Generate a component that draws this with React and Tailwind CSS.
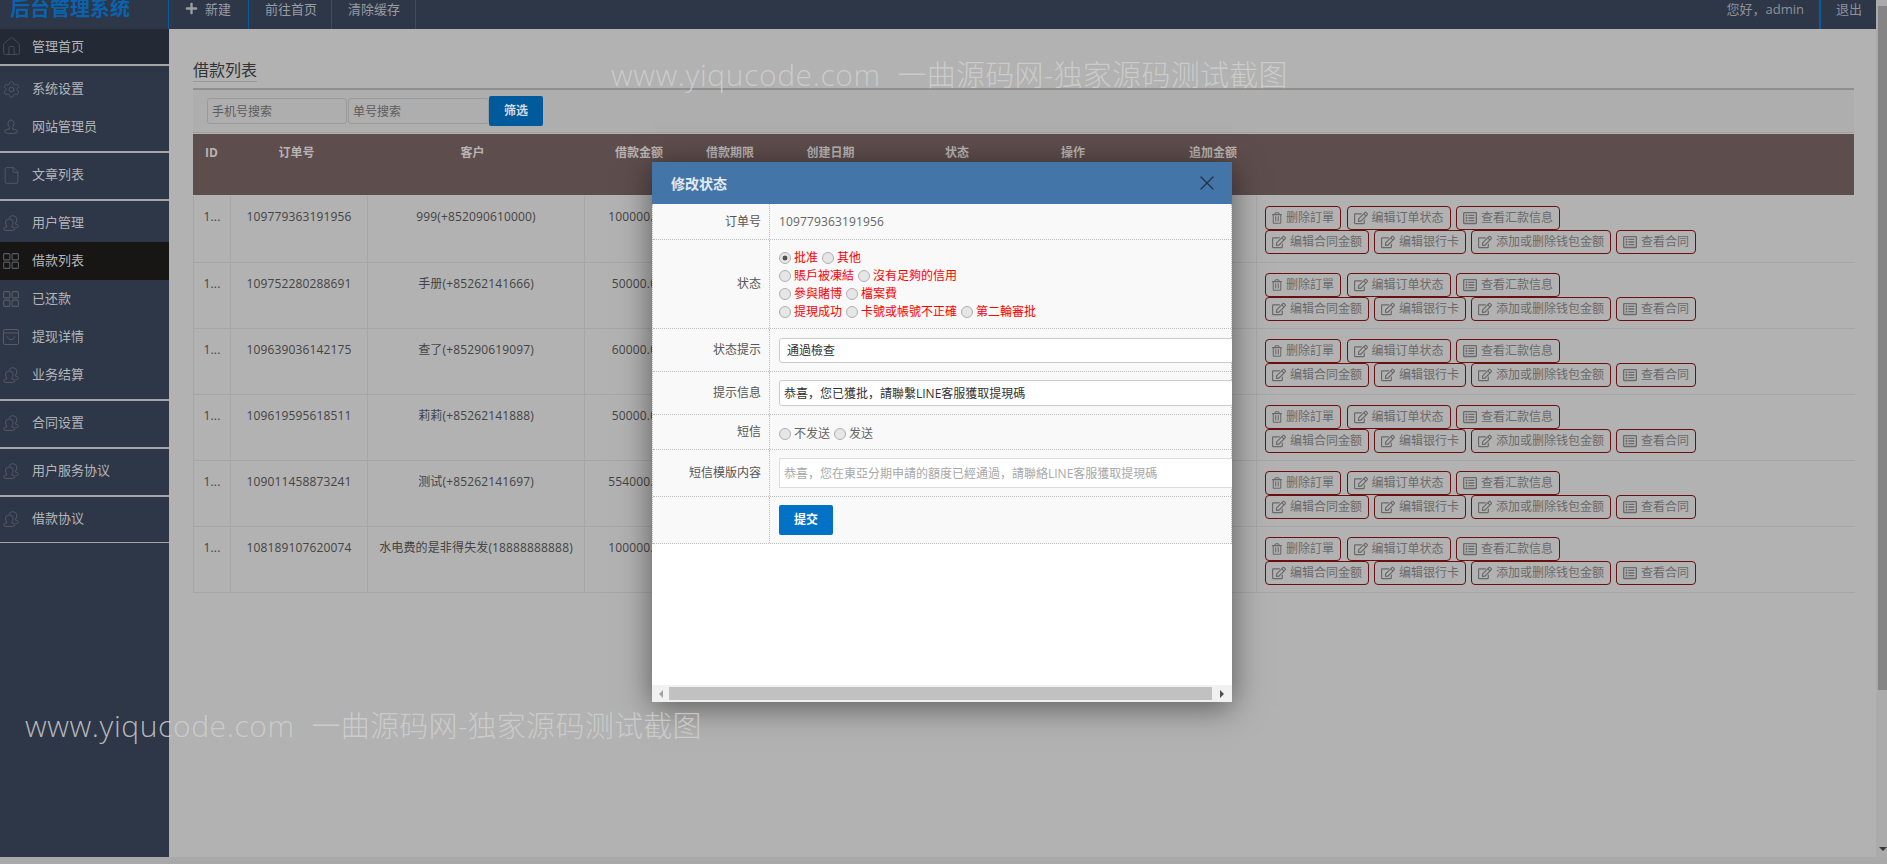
import { House, Settings, File, X } from "lucide-react";
import { FaPlus, FaRegTrashAlt, FaRegEdit, FaRegListAlt } from "react-icons/fa";

const FONT = "font-['Open_Sans','Noto_Sans_CJK_SC',sans-serif]";

function UserIcon() {
  return (
    <svg width="16" height="16" viewBox="0 0 16 16" fill="none" stroke="currentColor" strokeWidth="1">
      <path d="M8 1c-2 0-3 1.500-3 3.500 0 2 .8 3.300 1.500 4v1.500c-2.500.3-5 1.200-5 2.800 0 1 2.500 1.700 6.500 1.700s6.500-.7 6.500-1.700c0-1.600-2.500-2.500-5-2.800V8.500c.7-.7 1.500-2 1.500-4C11 2.500 10 1 8 1z" />
    </svg>
  );
}

function UsersIcon() {
  return (
    <svg width="16" height="16" viewBox="0 0 16 16" fill="none" stroke="currentColor" strokeWidth="1">
      <path d="M6 3.200C6.500 1.700 7.900.8 9.800.8c2.500 0 4 1.700 4 3.900 0 1.500-.6 2.700-1.400 3.400v1c1.700.3 3 1 3 2 0 .9-1.200 1.500-3 1.800" />
      <path d="M6.300 4c-2.300 0-3.800 1.700-3.800 3.800 0 1.400.6 2.500 1.300 3.200v1C2 12.300.6 13 .6 14c0 1 2.300 1.500 5.700 1.500S12 15 12 14c0-1-1.400-1.700-3.200-2v-1c.7-.7 1.300-1.800 1.300-3.200C10.100 5.700 8.600 4 6.300 4z" />
    </svg>
  );
}

function GridIcon() {
  return (
    <svg width="16" height="16" viewBox="0 0 16 16" fill="none" stroke="currentColor" strokeWidth="1.100">
      <rect x="0.600" y="0.600" width="6.300" height="6.300" rx="1" />
      <rect x="9.100" y="0.600" width="6.300" height="6.300" rx="1" />
      <rect x="0.600" y="9.100" width="6.300" height="6.300" rx="1" />
      <rect x="9.100" y="9.100" width="6.300" height="6.300" rx="1" />
    </svg>
  );
}

function BoxIcon() {
  return (
    <svg width="16" height="16" viewBox="0 0 16 16" fill="none" stroke="currentColor" strokeWidth="1">
      <rect x="0.500" y="0.500" width="15" height="15" rx="1.500" />
      <path d="M.5 4h15M4.500 7.500c.3 2 1.700 3.200 3.500 3.200s3.200-1.200 3.500-3.200" />
    </svg>
  );
}

function SideItem({ icon, label, active, height = "h-[38px]", bg = "" }) {
  return (
    <div className={`flex items-center pl-[3px] ${height} ${active ? "bg-[#171615]" : bg}`}>
      <span className="w-[16px] h-[16px] text-[#565b64] flex items-center justify-center">{icon}</span>
      <span className="ml-[13px] text-[13px] text-[#b4b6b8]">{label}</span>
    </div>
  );
}

function Sidebar() {
  return (
    <aside className="w-[169px] bg-[#2d3748] shrink-0">
      <div className="border-b-2 border-[#a6a6a6]">
        <SideItem icon={<House size={21} strokeWidth={1} className="shrink-0 text-[#4c515a]" />} label="管理首页" height="h-[35px]" bg="bg-[#232a36]" />
      </div>
      <div className="border-b-2 border-[#a6a6a6] pt-[4px] pb-[5px]">
        <SideItem icon={<Settings size={19} strokeWidth={1.100} className="shrink-0" />} label="系统设置" />
        <SideItem icon={<UserIcon />} label="网站管理员" />
      </div>
      <div className="border-b-2 border-[#a6a6a6] pt-[3px] pb-[5px]">
        <SideItem icon={<File size={19} strokeWidth={1.100} className="shrink-0" />} label="文章列表" />
      </div>
      <div className="border-b-2 border-[#a6a6a6] pt-[3px] pb-[5px]">
        <SideItem icon={<UsersIcon />} label="用户管理" />
        <SideItem icon={<GridIcon />} label="借款列表" active />
        <SideItem icon={<GridIcon />} label="已还款" />
        <SideItem icon={<BoxIcon />} label="提现详情" />
        <SideItem icon={<UsersIcon />} label="业务结算" />
      </div>
      <div className="border-b-2 border-[#a6a6a6] pt-[3px] pb-[5px]">
        <SideItem icon={<UsersIcon />} label="合同设置" />
      </div>
      <div className="border-b-2 border-[#a6a6a6] pt-[3px] pb-[5px]">
        <SideItem icon={<UsersIcon />} label="用户服务协议" />
      </div>
      <div className="border-b border-[#a6a6a6] pt-[3px] pb-[4px]">
        <SideItem icon={<UsersIcon />} label="借款协议" />
      </div>
    </aside>
  );
}

function TopBar() {
  return (
    <header className="h-[29px] bg-[#2d3748] flex shrink-0 text-[13px] leading-[18px] text-[#989ca3] overflow-hidden">
      <div className="w-[169px] border-r border-[#0b5a9c] shrink-0">
        <div className="pl-[10px] -mt-[1px] text-[20px] leading-[20px] font-bold text-[#0b62ad]">后台管理系统</div>
      </div>
      <div className="w-[80px] pl-[16px] border-r border-[#0b5a9c] flex items-start gap-[7px]">
        <FaPlus size={13} className="mt-[2px]" />
        <span>新建</span>
      </div>
      <div className="w-[83px] pl-[16px] border-r border-[#0b5a9c]">前往首页</div>
      <div className="w-[84px] pl-[16px] border-r border-[#0b5a9c]">清除缓存</div>
      <div className="ml-auto pr-[15px] text-[#8d9299]">您好，admin</div>
      <div className="w-[57px] pl-[15px] border-l-2 border-[#0b5a9c] text-[#8d9299]">退出</div>
    </header>
  );
}

const HEAD = [
  ["ID", "w-[37px]"],
  ["订单号", "w-[133px]"],
  ["客户", "w-[219px]"],
  ["借款金额", "w-[114px]"],
  ["借款期限", "w-[68px]"],
  ["创建日期", "w-[133px]"],
  ["状态", "w-[120px]"],
  ["操作", "w-[112px]"],
  ["", "w-[41px]"],
  ["追加金额", "w-[86px]"],
];

const ROWS = [
  ["109779363191956", "999(+852090610000)", "100000.00"],
  ["109752280288691", "手册(+85262141666)", "50000.00"],
  ["109639036142175", "查了(+85290619097)", "60000.00"],
  ["109619595618511", "莉莉(+85262141888)", "50000.00"],
  ["109011458873241", "测试(+85262141697)", "554000.00"],
  ["108189107620074", "水电费的是非得失发(18888888888)", "100000.00"],
];

function ActionButton({ icon, label }) {
  return (
    <button className="h-[24px] px-[6px] flex items-center gap-[4px] border border-[#6a1010] rounded-[4px] text-[12px] text-[#6a6a6a] whitespace-nowrap">
      {icon}
      {label}
    </button>
  );
}

function Actions() {
  const edit = <FaRegEdit size={14} />;
  const list = <FaRegListAlt size={14} />;
  return (
    <div className="pt-[10px] pl-[8px]">
      <div className="flex gap-[5.500px]">
        <ActionButton icon={<FaRegTrashAlt size={12} className="w-[10px]" />} label="删除訂單" />
        <ActionButton icon={edit} label="编辑订单状态" />
        <ActionButton icon={list} label="查看汇款信息" />
      </div>
      <div className="flex gap-[5px]">
        <ActionButton icon={edit} label="编辑合同金额" />
        <ActionButton icon={edit} label="编辑银行卡" />
        <ActionButton icon={edit} label="添加或删除钱包金额" />
        <ActionButton icon={list} label="查看合同" />
      </div>
    </div>
  );
}

function LoanTable() {
  const cell = "border-r border-b border-[#a6a6a6] align-top text-center pt-[12px] leading-[18px] text-[12px] text-[#444444] tracking-[0.14px]";
  return (
    <table className="w-[1661px] table-fixed border-collapse mt-[1px]">
      <colgroup>
        <col className="w-[37px]" />
        <col className="w-[137px]" />
        <col className="w-[217px]" />
        <col className="w-[110px]" />
        <col className="w-[72px]" />
        <col className="w-[128px]" />
        <col className="w-[126px]" />
        <col className="w-[236px]" />
        <col className="w-[598px]" />
      </colgroup>
      <tbody>
        {ROWS.map((r) => (
          <tr key={r[0]} className="h-[66px]">
            <td className={`${cell} border-l`}>1...</td>
            <td className={cell}>{r[0]}</td>
            <td className={cell}>{r[1]}</td>
            <td className={`${cell} pr-[3px]`}>{r[2]}</td>
            <td className={cell} />
            <td className={cell} />
            <td className={cell} />
            <td className={cell} />
            <td className="border-b border-[#a6a6a6] align-top">
              <Actions />
            </td>
          </tr>
        ))}
      </tbody>
    </table>
  );
}

function Main() {
  return (
    <main className="flex-1 bg-[#b2b2b2] pl-[24px] pr-[22px] pt-[29px] overflow-hidden">
      <div className="border-b-2 border-[#8f8f8f] pb-[6px]">
        <h1 className="inline-block text-[16px] leading-[22px] font-normal text-[#333333] border-b border-[#9a9a9a]">借款列表</h1>
      </div>
      <div className="bg-[#aeaeae] border-b border-[#a0a0a0] pl-[14px] py-[6px] flex items-center">
        <input placeholder="手机号搜索" className="w-[140px] h-[26px] pl-[4px] text-[12px] rounded-[3px] border border-[#9a9a9a] placeholder:text-[#5c5c5c] outline-none" />
        <input placeholder="单号搜索" className="w-[141px] h-[26px] ml-[1px] pl-[4px] text-[12px] rounded-[3px] border border-[#9a9a9a] placeholder:text-[#5c5c5c] outline-none" />
        <button className="w-[54px] h-[30px] bg-[#005a9c] rounded-[2px] text-[12px] font-bold text-[#d3dbe3]">筛选</button>
      </div>
      <div className="mt-[1px] h-[61px] bg-[#5e4d4d] flex pt-[10px] text-[12px] leading-[18px] font-bold text-[#b8b4b4]">
        {HEAD.map(([label, w], i) => (
          <div key={i} className={`${w} text-center shrink-0`}>{label}</div>
        ))}
      </div>
      <LoanTable />
    </main>
  );
}

function Radio({ checked, label, red }) {
  return (
    <label className={`inline-flex items-center gap-[3px] mr-[4px] ${red ? "text-[#ff0000]" : "text-[#666666]"}`}>
      <input
        type="radio"
        readOnly
        checked={!!checked}
        className={`appearance-none w-[12px] h-[12px] rounded-full border border-[#b0b0b0] ${checked ? "bg-[radial-gradient(circle,#555555_32%,#e6e6e6_38%)]" : "bg-[#e6e6e6]"}`}
      />
      {label}
    </label>
  );
}

function FormRow({ label, height, children }) {
  return (
    <div className={`flex border-b border-dotted border-[#bbbbbb] ${height}`}>
      <div className="w-[117px] shrink-0 border-r border-dotted border-[#bbbbbb] flex items-center justify-end pr-[8px] text-[#555555]">{label}</div>
      <div className="flex-1 pl-[9px] flex items-center min-w-0">{children}</div>
    </div>
  );
}

function Modal() {
  return (
    <div className="absolute left-[652px] top-[162px] w-[580px] h-[540px] bg-white flex flex-col shadow-[0_5px_30px_rgba(0,0,0,0.5)] text-[12px]">
      <div className="h-[42px] bg-[#4475a8] flex items-center justify-between pl-[19px] pr-[13px] shrink-0">
        <span className="text-[14px] font-bold text-[#e3eaf1]">修改状态</span>
        <X size={24} strokeWidth={1.200} className="text-[#1f3348]" />
      </div>
      <div className="flex-1 overflow-hidden">
        <div className="bg-[#f9f9f9] border-x border-dotted border-[#bbbbbb]">
          <FormRow label="订单号" height="h-[36px]">
            <span className="text-[#666666] tracking-[0.14px]">109779363191956</span>
          </FormRow>
          <FormRow label="状态" height="h-[89px]">
            <div className="leading-[18px] pt-[2px]">
              <div className="flex"><Radio checked red label="批准" /><Radio red label="其他" /></div>
              <div className="flex"><Radio red label="賬戶被凍結" /><Radio red label="沒有足夠的信用" /></div>
              <div className="flex"><Radio red label="參與賭博" /><Radio red label="檔案費" /></div>
              <div className="flex"><Radio red label="提現成功" /><Radio red label="卡號或帳號不正確" /><Radio red label="第二輪審批" /></div>
            </div>
          </FormRow>
          <FormRow label="状态提示" height="h-[43px]">
            <input readOnly value="通過檢查" className="shrink-0 w-[455px] h-[25px] bg-white border border-[#cccccc] rounded-[3px] pl-[7px] text-[#333333] outline-none" />
          </FormRow>
          <FormRow label="提示信息" height="h-[43px]">
            <input readOnly value="恭喜，您已獲批，請聯繫LINE客服獲取提現碼" className="shrink-0 w-[455px] h-[26px] bg-white border border-[#cccccc] rounded-[3px] pl-[4px] text-[#333333] outline-none" />
          </FormRow>
          <FormRow label="短信" height="h-[35px]">
            <div className="flex pt-[3px]"><Radio label="不发送" /><Radio label="发送" /></div>
          </FormRow>
          <FormRow label="短信模版内容" height="h-[47px]">
            <input readOnly placeholder="恭喜，您在東亞分期申請的額度已經通過，請聯絡LINE客服獲取提現碼" className="shrink-0 w-[470px] h-[30px] bg-white border border-[#dddddd] pl-[4px] placeholder:text-[#a8a8a8] outline-none" />
          </FormRow>
          <FormRow label="" height="h-[47px]">
            <button className="w-[54px] h-[30px] bg-[#0272c6] rounded-[2px] font-bold text-white">提交</button>
          </FormRow>
        </div>
      </div>
      <div className="h-[17px] bg-[#f1f1f1] flex items-center shrink-0">
        <div className="w-[17px] flex justify-center">
          <div className="w-0 h-0 border-y-[4px] border-y-transparent border-r-[4px] border-r-[#a3a3a3]" />
        </div>
        <div className="w-[543px] h-[13px] bg-[#c1c1c1]" />
        <div className="w-[20px] flex justify-center">
          <div className="w-0 h-0 border-y-[4px] border-y-transparent border-l-[4px] border-l-[#505050]" />
        </div>
      </div>
    </div>
  );
}

function Watermark({ className }) {
  return (
    <div className={`absolute pointer-events-none whitespace-pre leading-[36px] font-light text-[#d0d0d0]/85 ${className}`}>
      <span className="text-[30px] tracking-[0.6px]">www.yiqucode.com  </span>
      <span className="text-[29px] tracking-[0.3px]">一曲源码网-独家源码测试截图</span>
    </div>
  );
}

export default function App() {
  return (
    <div className={`${FONT} relative h-screen w-full overflow-hidden flex flex-col bg-[#b2b2b2]`}>
      <div className="flex-1 flex min-h-0">
        <div className="flex-1 flex flex-col min-w-0">
          <TopBar />
          <div className="flex-1 flex min-h-0">
            <Sidebar />
            <Main />
          </div>
        </div>
        <div className="w-[11px] shrink-0 bg-[#ababab] pl-[2px] flex flex-col">
          <div className="mt-[6px] h-[684px] bg-[#858585]" />
          <div className="mt-auto mb-[6px] flex justify-center">
            <div className="w-0 h-0 border-x-[4px] border-x-transparent border-t-[4px] border-t-[#3a3a3a]" />
          </div>
        </div>
      </div>
      <div className="h-[7px] shrink-0 bg-[#a9a9a9]" />
      <Modal />
      <Watermark className="left-[611px] top-[57px]" />
      <Watermark className="left-[25px] top-[708px]" />
    </div>
  );
}
